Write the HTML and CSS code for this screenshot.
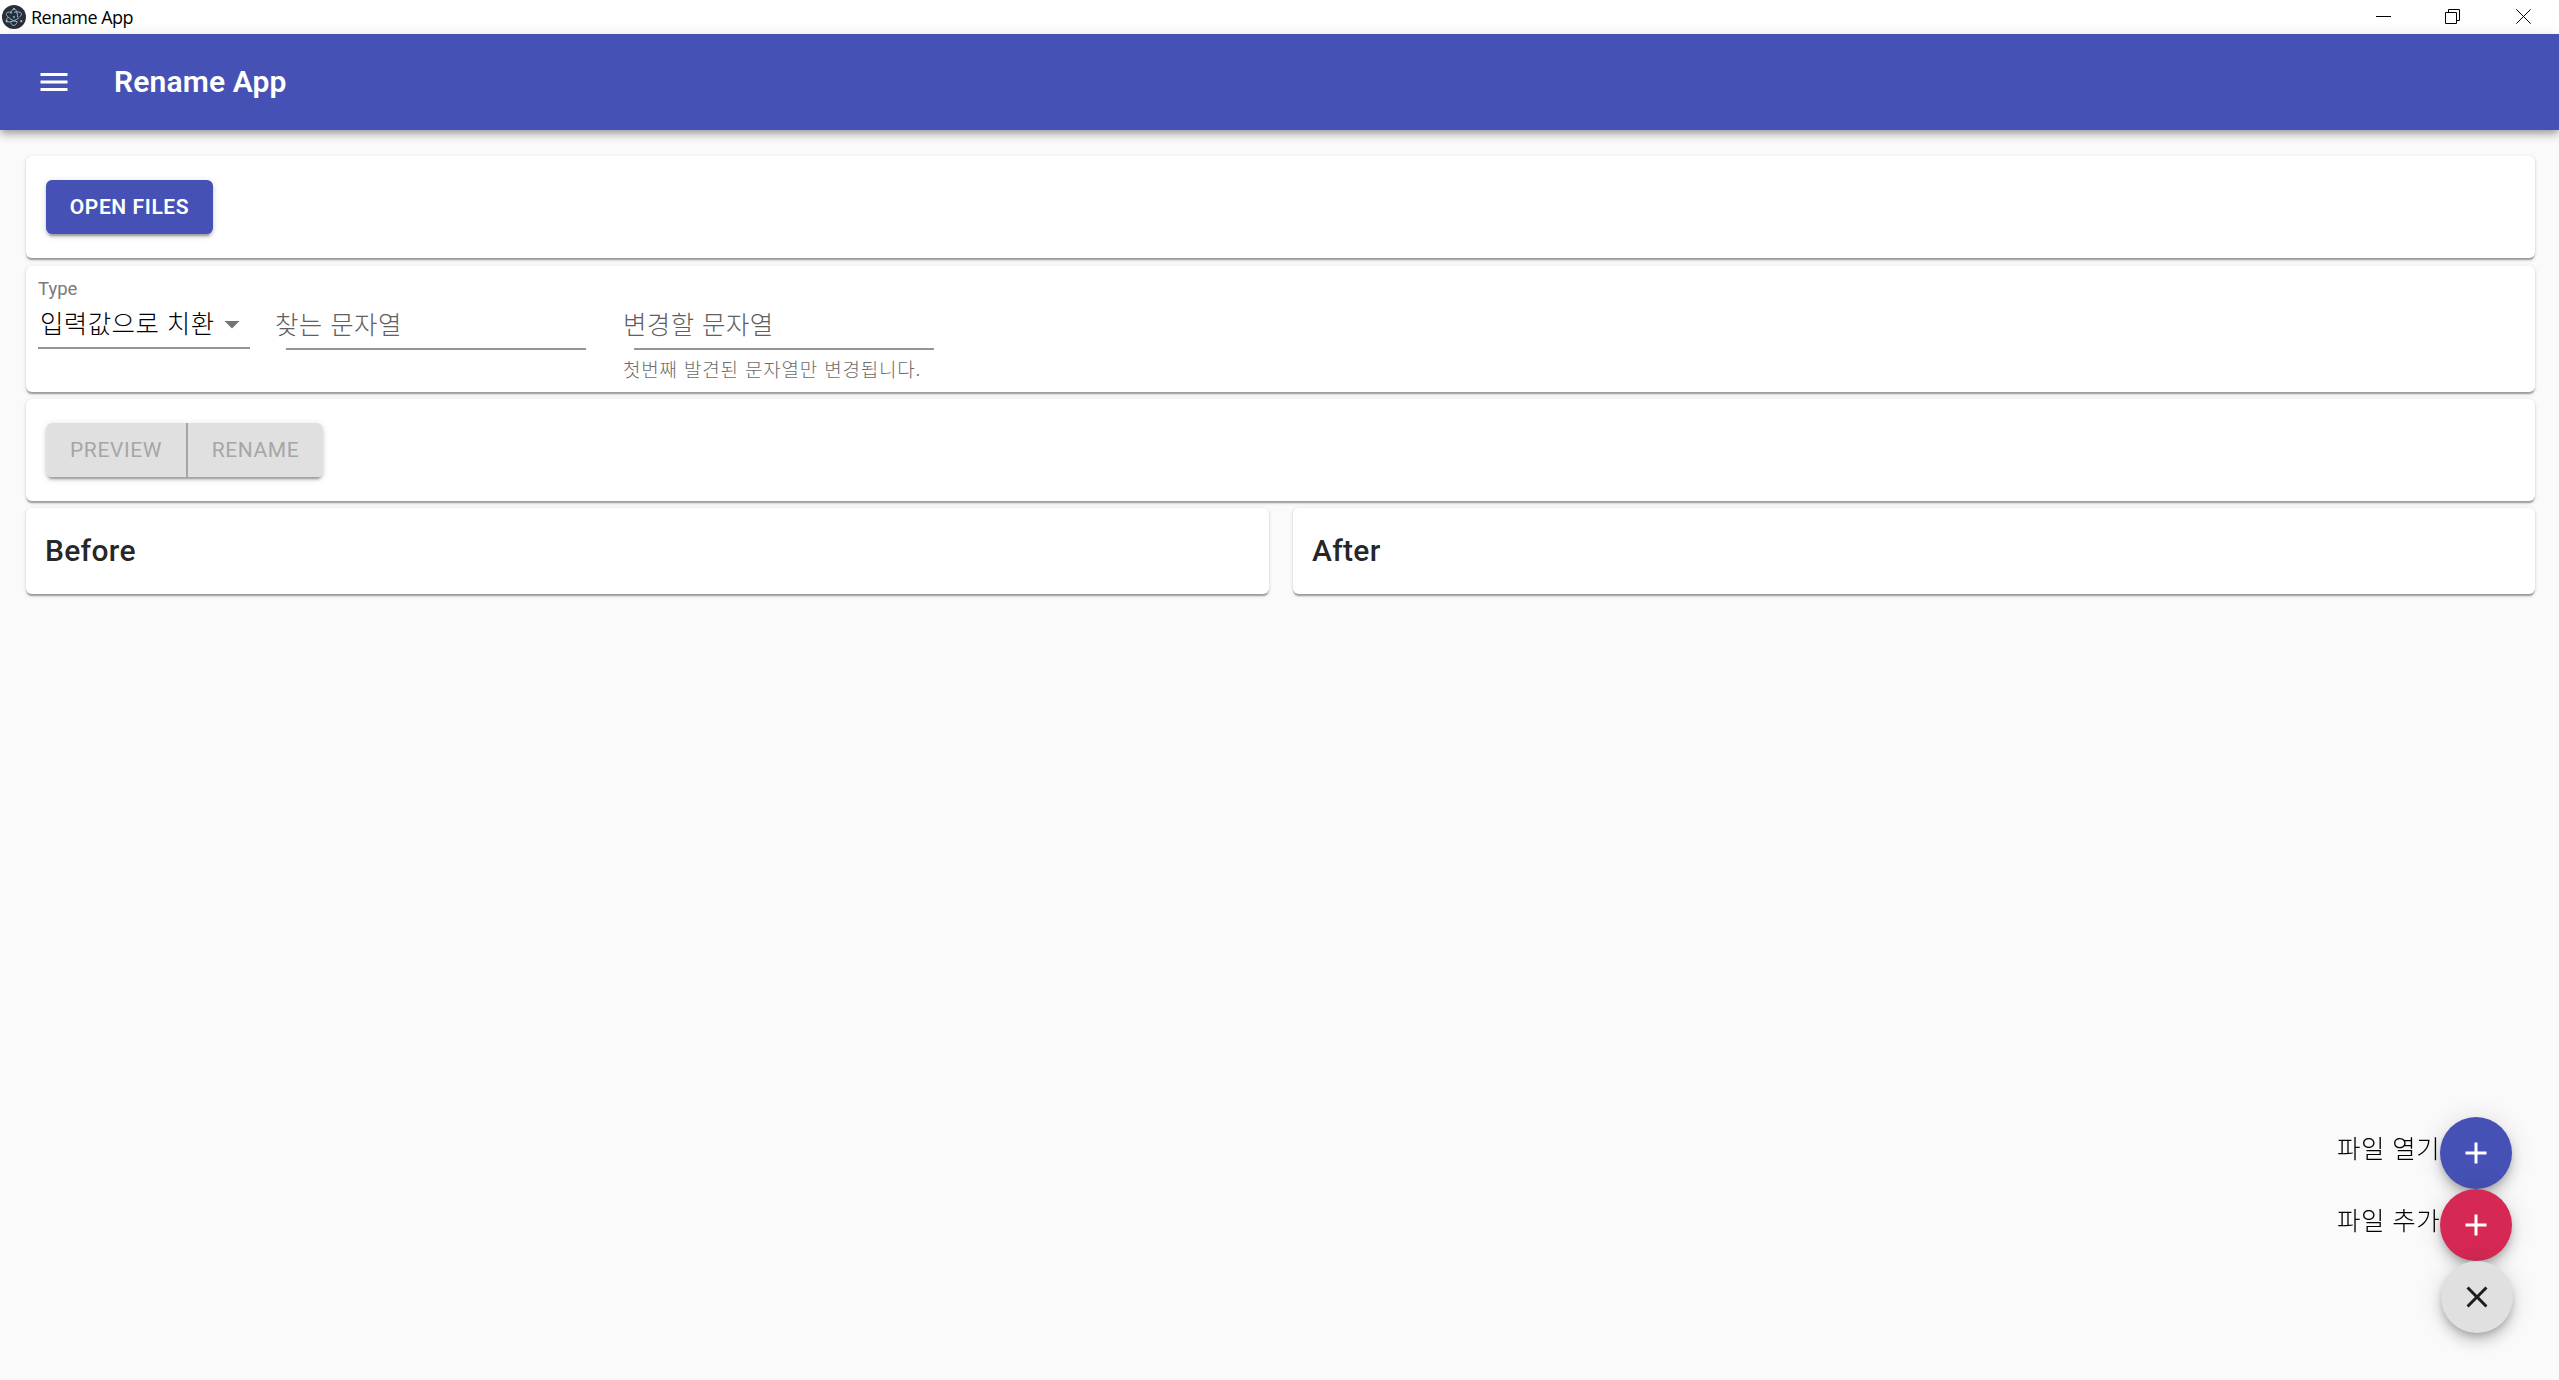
FILE: index.html
```html
<!DOCTYPE html>
<html lang="ko">
<head>
<meta charset="utf-8">
<title>Rename App</title>
<link rel="stylesheet" href="styles.css">
</head>
<body>
<header class="titlebar">
  <svg class="app-icon" viewBox="0 0 24 24" fill="none">
    <circle cx="12" cy="12" r="12" fill="#2b2e3a"/>
    <g stroke="#8fc3cd" stroke-width="1">
      <path d="M9.500 7.300C7 6.900 5 7.200 4.500 8.200c-.8 1.400 1.200 4 4.500 6.100 2.200 1.400 4.600 2.200 6.500 2.400"/>
      <path d="M12 7.200c3.400-.6 6.600-.3 7.300 1 .5.900-.2 2.300-1.700 3.700"/>
      <path d="M6.500 12c-1.700 1.600-2.600 3.100-2 4.100.7 1.200 3.600 1.100 6.800-.1 2.100-.8 4.300-2 5.900-3.500"/>
      <path d="M8.700 17.500c.8 1.900 1.900 3 3.100 3 1.300 0 2.400-1.200 3.200-3.200"/>
      <path d="M15.500 12.200c0-4.700-1.500-8.300-3.500-8.300-1.500 0-2.700 2-3.200 5"/>
    </g>
    <g fill="#8fc3cd"><circle cx="12" cy="12" r=".9"/><circle cx="12" cy="4" r="1.100"/><circle cx="4.700" cy="16.200" r="1.100"/><circle cx="19.200" cy="16.200" r="1.100"/></g>
  </svg>
  <span class="window-title">Rename App</span>
  <div class="window-controls">
    <svg viewBox="0 0 15 15"><path d="M0 7.5h15"/></svg>
    <svg viewBox="0 0 15 15"><path d="M.5 3.5h11v11H.5zM3.5 3.500V.5h11v11h-3"/></svg>
    <svg viewBox="0 0 15 15"><path d="M.3.3l14.400 14.400M14.700.3L.3 14.700"/></svg>
  </div>
</header>
<nav class="appbar">
  <svg class="menu-icon" viewBox="0 0 24 24"><path d="M3 18h18v-2H3v2zm0-5h18v-2H3v2zm0-7v2h18V6H3z"/></svg>
  <h1 class="appbar-title">Rename App</h1>
</nav>
<main class="content">
  <section class="card card-actions"><button class="btn btn-primary">OPEN FILES</button></section>
  <section class="card card-form">
    <div class="field field-select">
      <label class="field-label">Type</label>
      <div class="select"><span class="ko select-value">입력값으로 치환</span><svg class="arrow" viewBox="0 0 24 24"><path d="M7 10l5 5 5-5z"/></svg></div>
    </div>
    <div class="field field-find"><div class="ko placeholder">찾는 문자열</div><div class="underline"></div></div>
    <div class="field field-replace"><div class="ko placeholder">변경할 문자열</div><div class="underline"></div><p class="ko helper">첫번째 발견된 문자열만 변경됩니다.</p></div>
  </section>
  <section class="card card-actions">
    <div class="btn-group"><button class="btn btn-disabled btn-first" disabled>PREVIEW</button><button class="btn btn-disabled" disabled>RENAME</button></div>
  </section>
  <div class="columns">
    <section class="card card-list"><h2>Before</h2></section>
    <section class="card card-list"><h2>After</h2></section>
  </div>
</main>
<aside class="speed-dial">
  <div class="dial-row"><span class="ko dial-label">파일 열기</span><button class="fab fab-primary"><svg viewBox="0 0 24 24"><path d="M19 13h-6v6h-2v-6H5v-2h6V5h2v6h6v2z"/></svg></button></div>
  <div class="dial-row"><span class="ko dial-label">파일 추가</span><button class="fab fab-secondary"><svg viewBox="0 0 24 24"><path d="M19 13h-6v6h-2v-6H5v-2h6V5h2v6h6v2z"/></svg></button></div>
  <div class="dial-row dial-close"><button class="fab fab-default"><svg viewBox="0 0 24 24"><path d="M19 6.410L17.590 5 12 10.590 6.410 5 5 6.410 10.590 12 5 17.590 6.410 19 12 13.410 17.590 19 19 17.590 13.410 12z"/></svg></button></div>
</aside>
</body>
</html>
```
FILE: styles.css
```css
* { box-sizing: border-box; }
body { margin: 0; height: 1380px; overflow: hidden; background: #fafafa; color: rgba(0,0,0,.87); font-family: Roboto, "Noto Sans CJK KR", sans-serif; }
h1, h2, p { margin: 0; font-weight: 500; }
button { border: 0; padding: 0; font-family: inherit; }
.ko { font-family: "Noto Sans CJK KR", sans-serif; font-weight: 300; white-space: nowrap; letter-spacing: .4px; }

.titlebar { height: 34px; display: flex; align-items: center; background: #fff; padding-left: 2px; color: #000; }
.app-icon { width: 24px; height: 24px; }
.window-title { margin-left: 5px; font: 18px/34px "Open Sans", sans-serif; letter-spacing: -.5px; }
.window-controls { margin-left: auto; margin-right: 28px; display: flex; padding-bottom: 2px; }
.window-controls svg { width: 15px; height: 15px; fill: none; stroke: #000; stroke-width: 1; }
.window-controls svg:nth-child(2) { margin: 0 56px 0 54px; }

.appbar { position: relative; height: 96px; display: flex; align-items: center; padding-left: 36px; background: #4651b5; color: #fff; box-shadow: 0 3px 6px -1.5px rgba(0,0,0,.2), 0 6px 7.5px rgba(0,0,0,.14), 0 1.5px 15px rgba(0,0,0,.12); }
.menu-icon { width: 36px; height: 36px; fill: currentColor; }
.appbar-title { margin-left: 42px; font-size: 30px; line-height: 48px; letter-spacing: .15px; font-weight: 600; }

.content { padding: 26px 24px 0 26px; display: flex; flex-direction: column; }
.card { background: #fff; border-radius: 6px; box-shadow: 0 3px 1.500px -1.500px rgba(0,0,0,.2), 0 1.500px 1.500px rgba(0,0,0,.14), 0 1.500px 4.500px rgba(0,0,0,.12); }
.card-actions { height: 102px; padding: 24px 20px; display: flex; margin-bottom: 8px; }
.btn { height: 54px; border-radius: 6px; font-size: 21px; font-weight: 500; letter-spacing: .6px; white-space: nowrap; }
.btn-primary { width: 167px; background: #4651b5; color: #fff; font-weight: 600; letter-spacing: .6px; box-shadow: 0 4.500px 1.500px -3px rgba(0,0,0,.2), 0 3px 3px rgba(0,0,0,.14), 0 1.500px 7.500px rgba(0,0,0,.12); }
.btn-group { display: flex; border-radius: 6px; box-shadow: 0 4.500px 1.500px -3px rgba(0,0,0,.2), 0 3px 3px rgba(0,0,0,.14), 0 1.500px 7.500px rgba(0,0,0,.12); }
.btn-disabled { width: 135px; background: #e0e0e0; color: #a6a6a6; font-weight: 400; border-radius: 0 6px 6px 0; }
.btn-first { width: 142px; border-right: 2px solid #a6a6a6; border-radius: 6px 0 0 6px; }

.card-form { height: 126px; margin-bottom: 7px; padding-left: 12px; display: flex; }
.card-form + .card-actions { margin-bottom: 7px; }
.field-select { width: 212px; padding-top: 11px; }
.field-label { display: block; height: 24px; font-size: 18.5px; line-height: 24px; color: #7a7a7a; }
.select { height: 48px; display: flex; justify-content: space-between; align-items: center; border-bottom: 2px solid #949494; }
.select-value { font-size: 25.5px; line-height: 38px; padding: 0 0 5px 2px; color: #000; }
.arrow { width: 36px; height: 36px; fill: #757575; margin-left: -10px; }
.field-find { width: 312px; margin-left: 24px; padding-top: 36px; }
.field-replace { width: 312px; margin-left: 36px; padding-top: 36px; }
.placeholder { height: 46px; line-height: 41px; font-size: 25.5px; color: #606060; padding-left: 1px; }
.underline { width: 300px; height: 2px; margin-left: 12px; background: #949494; }
.helper { font-size: 19px; line-height: 26px; margin-top: 6px; padding-left: 1px; color: #6c6c6c; letter-spacing: .8px; }

.columns { display: grid; grid-template-columns: 1243px 1242px; justify-content: space-between; }
.card-list { height: 86px; padding: 19px 19px; }
.card-list h2 { font-size: 30px; line-height: 48px; letter-spacing: .3px; }

.speed-dial { position: fixed; right: 47px; bottom: 47px; display: flex; flex-direction: column; align-items: flex-end; }
.dial-row { display: flex; height: 72px; }
.dial-close { margin-right: -1px; }
.dial-label { font-size: 25.5px; line-height: 60px; color: #000; }
.fab { width: 72px; height: 72px; border-radius: 50%; display: flex; align-items: center; justify-content: center; box-shadow: 0 4.500px 7.500px -1.500px rgba(0,0,0,.2), 0 9px 15px rgba(0,0,0,.14), 0 1.500px 27px rgba(0,0,0,.12); }
.fab svg { width: 36px; height: 36px; fill: currentColor; }
.fab-primary { background: #4651b5; color: #fff; }
.fab-secondary { background: #d62854; color: #fff; }
.fab-default { background: #e0e0e0; color: rgba(0,0,0,.87); }
```
